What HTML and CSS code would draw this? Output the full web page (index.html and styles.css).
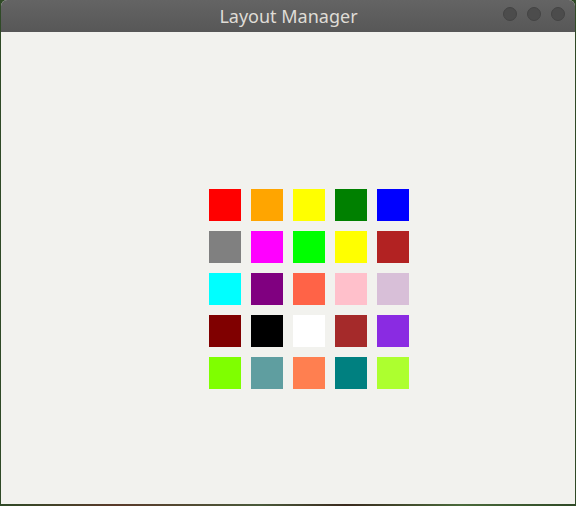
FILE: index.html
```html
<!DOCTYPE html>
<html>
<head>
<meta charset="utf-8">
<title>Layout Manager</title>
<link rel="stylesheet" href="styles.css">
</head>
<body>
<div class="window">
  <div class="titlebar">
    <span class="title">Layout Manager</span>
    <div class="controls">
      <span class="dot"></span><span class="dot"></span><span class="dot"></span>
    </div>
  </div>
  <div class="content">
    <div class="grid">
      <div class="sq c-red"></div><div class="sq c-orange"></div><div class="sq c-yellow"></div><div class="sq c-green"></div><div class="sq c-blue"></div>
      <div class="sq c-gray"></div><div class="sq c-magenta"></div><div class="sq c-lime"></div><div class="sq c-yellow"></div><div class="sq c-firebrick"></div>
      <div class="sq c-cyan"></div><div class="sq c-purple"></div><div class="sq c-tomato"></div><div class="sq c-pink"></div><div class="sq c-thistle"></div>
      <div class="sq c-maroon"></div><div class="sq c-black"></div><div class="sq c-white"></div><div class="sq c-brown"></div><div class="sq c-blueviolet"></div>
      <div class="sq c-chartreuse"></div><div class="sq c-cadetblue"></div><div class="sq c-coral"></div><div class="sq c-teal"></div><div class="sq c-greenyellow"></div>
    </div>
  </div>
</div>
</body>
</html>
```

FILE: styles.css
```css
html, body {
  margin: 0;
  padding: 0;
}
body {
  width: 576px;
  height: 506px;
  background: linear-gradient(90deg, #2f4a26 0%, #5a3a2a 20%, #4a5a3a 45%, #3a2a1e 60%, #4a6a3a 80%, #2f4a26 100%);
  overflow: hidden;
}
.window {
  margin-left: 1px;
  width: 574px;
  height: 504px;
  display: flex;
  flex-direction: column;
  background: #f2f2ee;
  border-radius: 6px 6px 0 0;
  overflow: hidden;
}
.titlebar {
  height: 32px;
  flex: none;
  background: linear-gradient(#646464, #575757);
  display: flex;
  align-items: center;
  justify-content: center;
  position: relative;
}
.title {
  font-family: "Noto Sans", "Open Sans", sans-serif;
  font-size: 18px;
  color: #dfdcd6;
  margin-left: 1px;
  margin-top: 0;
}
.controls {
  position: absolute;
  right: 10px;
  top: 7px;
  display: flex;
  gap: 10px;
}
.dot {
  width: 12px;
  height: 12px;
  border-radius: 50%;
  background: #4c4c4c;
  border: 1px solid #444;
}
.content {
  flex: 1;
  padding: 157px 0 0 208px;
}
.grid {
  display: grid;
  grid-template-columns: repeat(5, 32px);
  grid-auto-rows: 32px;
  gap: 10px;
}
.c-red { background: #ff0000; }
.c-orange { background: #ffa500; }
.c-yellow { background: #ffff00; }
.c-green { background: #008000; }
.c-blue { background: #0000ff; }
.c-gray { background: #808080; }
.c-magenta { background: #ff00ff; }
.c-lime { background: #00ff00; }
.c-firebrick { background: #b22222; }
.c-cyan { background: #00ffff; }
.c-purple { background: #800080; }
.c-tomato { background: #ff6347; }
.c-pink { background: #ffc0cb; }
.c-thistle { background: #d8bfd8; }
.c-maroon { background: #800000; }
.c-black { background: #000000; }
.c-white { background: #ffffff; }
.c-brown { background: #a52a2a; }
.c-blueviolet { background: #8a2be2; }
.c-chartreuse { background: #7fff00; }
.c-cadetblue { background: #5f9ea0; }
.c-coral { background: #ff7f50; }
.c-teal { background: #008080; }
.c-greenyellow { background: #adff2f; }
```
